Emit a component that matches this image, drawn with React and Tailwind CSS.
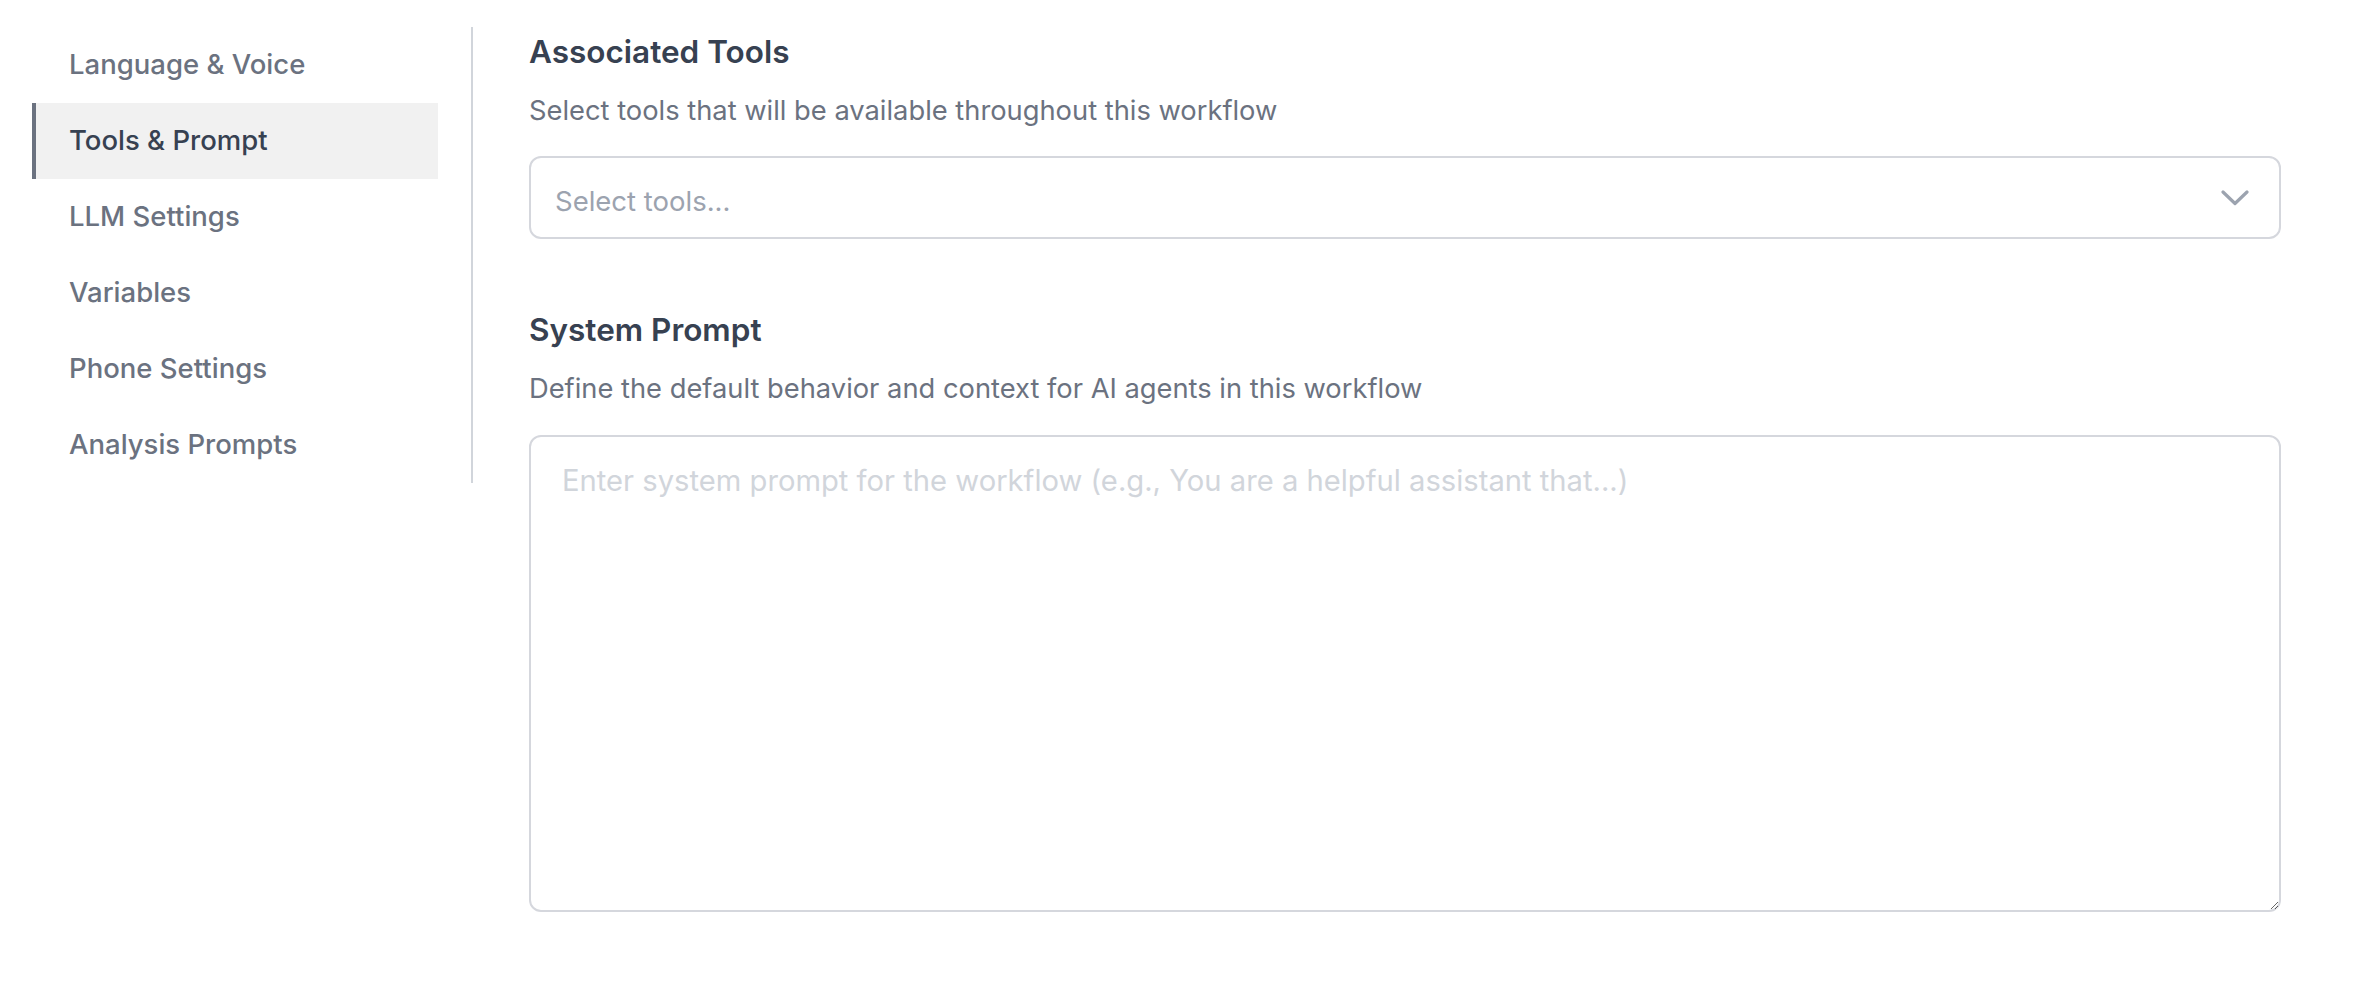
import React from "react";

const items = [
  "Language & Voice",
  "Tools & Prompt",
  "LLM Settings",
  "Variables",
  "Phone Settings",
  "Analysis Prompts",
];

export default function App() {
  const active = "Tools & Prompt";
  return (
    <div className="flex w-full min-h-screen bg-white pt-[27px] pl-[32px] pr-[73px] font-['Inter',sans-serif]">
      <aside className="w-[441px] shrink-0 self-start border-r-2 border-[#d1d5db] pr-[33px]">
        <nav className="flex flex-col">
          {items.map((it) => {
            const isActive = it === active;
            return (
              <div
                key={it}
                className={
                  isActive
                    ? "flex h-[76px] items-center border-l-4 border-[#6b7280] bg-[#f1f1f1] pl-[33px] text-[27.5px] font-medium text-[#374151]"
                    : "flex h-[76px] items-center border-l-4 border-transparent pl-[33px] text-[27.5px] font-medium text-[#6b7280]"
                }
              >
                {it}
              </div>
            );
          })}
        </nav>
      </aside>
      <main className="flex-1 min-w-0 pl-[56px]">
        <h2 className="mt-[4px] text-[31.5px] leading-[42px] font-semibold text-[#374151]">
          Associated Tools
        </h2>
        <p className="mt-[18px] text-[27.3px] leading-[40px] text-[#6b7280]">
          Select tools that will be available throughout this workflow
        </p>
        <div className="mt-[25px] flex h-[83px] items-center justify-between rounded-[12px] border-2 border-[#d5d7dd] bg-white pl-[24px] pr-[30px] pt-[6px]">
          <span className="text-[27.5px] leading-[40px] text-[#9ca3af]">Select tools...</span>
          <svg width="28" height="16" viewBox="0 0 28 16" fill="none" className="-mt-[6px]">
            <polyline
              points="2,2 14,13.5 26,2"
              stroke="#9ca3af"
              strokeWidth="3.2"
              strokeLinecap="round"
              strokeLinejoin="round"
            />
          </svg>
        </div>

        <h2 className="mt-[70px] text-[31.5px] leading-[42px] font-semibold text-[#374151]">
          System Prompt
        </h2>
        <p className="mt-[18px] text-[27.3px] leading-[40px] text-[#6b7280]">
          Define the default behavior and context for AI agents in this workflow
        </p>
        <textarea
          className="mt-[26px] block h-[477px] w-full resize-y rounded-[12px] border-2 border-[#d5d7dd] bg-white px-[31px] py-[24px] text-[29.2px] leading-[40px] text-[#374151] outline-none placeholder:text-[#d1d5db]"
          placeholder="Enter system prompt for the workflow (e.g., You are a helpful assistant that...)"
        />
      </main>
    </div>
  );
}
